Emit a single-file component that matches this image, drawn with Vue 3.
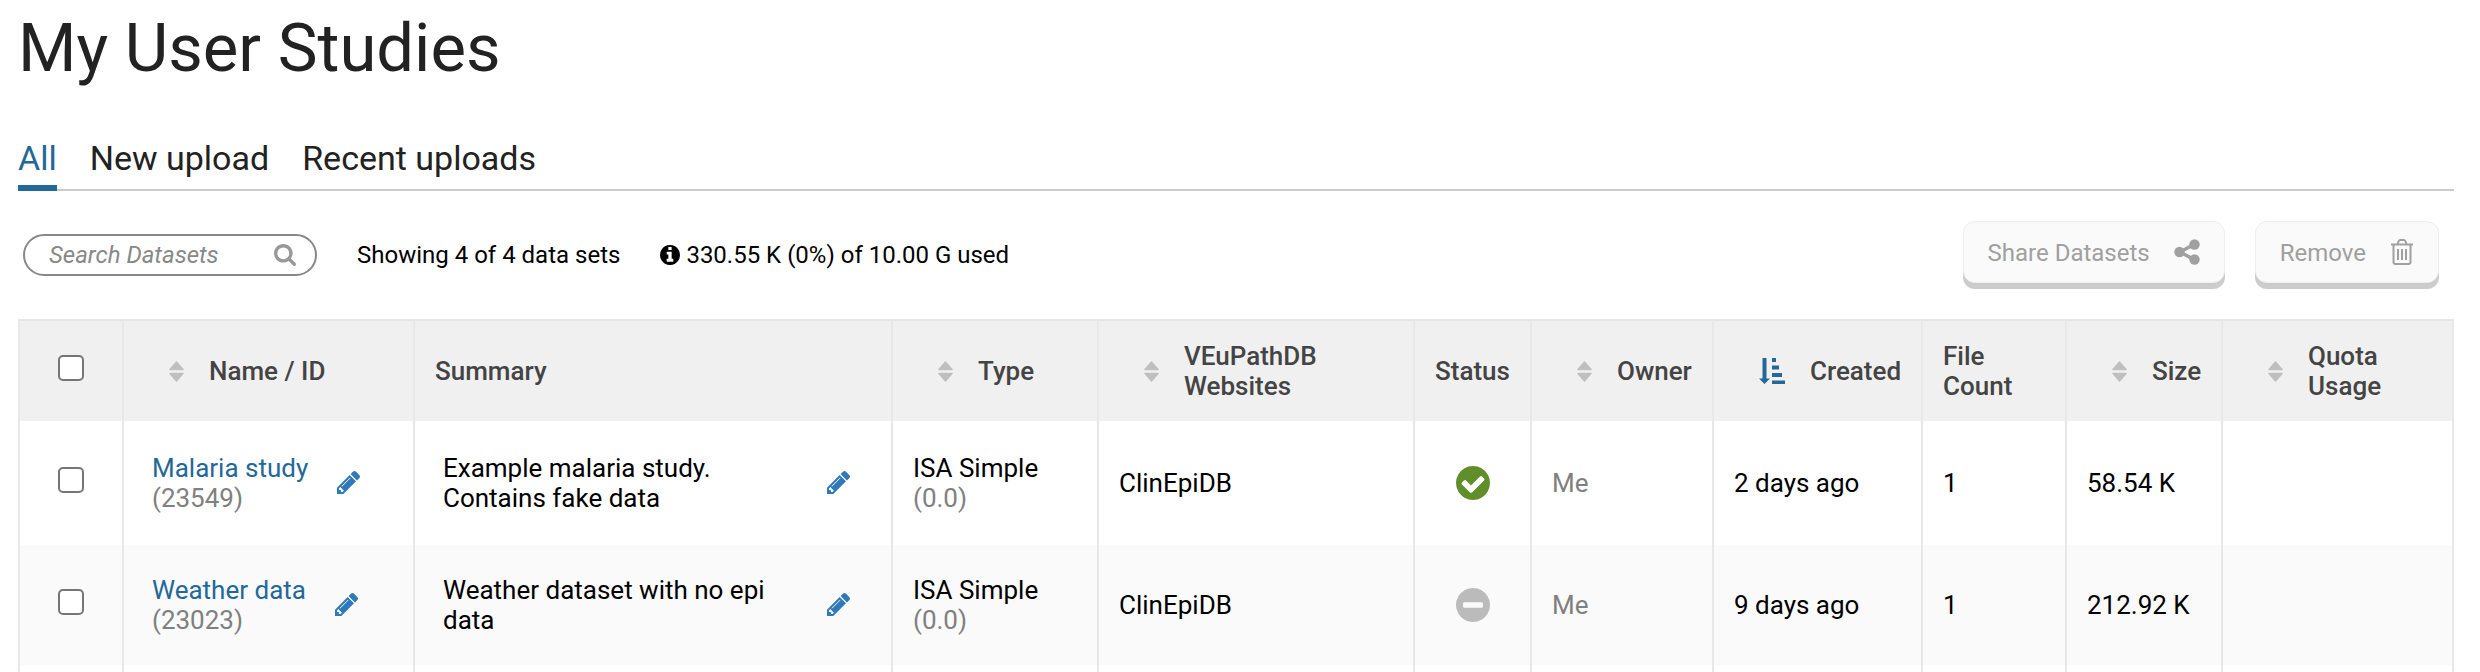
<script setup>
import { ref } from 'vue'

const search = ref('')
const tabs = ['All', 'New upload', 'Recent uploads']
const active = ref('All')

const disc = 'q0 209-103 385.5t-279.5 279.5-385.5 103-385.5-103-279.5-279.5-103-385.5 103-385.5 279.5-279.5 385.5-103 385.5 103 279.5 279.5 103 385.5z'
const infoPath = 'M1152 1376v-160q0-14-9-23t-23-9h-96v-512q0-14-9-23t-23-9h-320q-14 0-23 9t-9 23v160q0 14 9 23t23 9h96v320h-96q-14 0-23 9t-9 23v160q0 14 9 23t23 9h448q14 0 23-9t9-23zm-128-896v-160q0-14-9-23t-23-9h-192q-14 0-23 9t-9 23v160q0 14 9 23t23 9h192q14 0 23-9t9-23zm640 416' + disc
const checkPath = 'M1412 734q0-28-18-46l-91-90q-19-19-45-19t-45 19l-408 407-226-226q-19-19-45-19t-45 19l-91 90q-18 18-18 46 0 27 18 45l362 362q19 19 45 19 27 0 46-19l543-543q18-18 18-45zm252 162' + disc
const minusPath = 'M1344 960v-128q0-26-19-45t-45-19h-768q-26 0-45 19t-19 45v128q0 26 19 45t45 19h768q26 0 45-19t19-45zm320-64' + disc
const pencilPath = 'M491 1536l91-91-235-235-91 91v107h128v128h107zm523-928q0-22-22-22-10 0-17 7l-542 542q-7 7-7 17 0 22 22 22 10 0 17-7l542-542q7-7 7-17zm-54-192l416 416-832 832h-416v-416zm683 96q0 53-37 90l-166 166-416-416 166-165q36-38 90-38 53 0 91 38l235 234q37 39 37 91z'
const searchPath = 'M1216 832q0-185-131.5-316.5t-316.5-131.5-316.5 131.5-131.5 316.5 131.5 316.5 316.5 131.5 316.5-131.5 131.5-316.5zm512 832q0 52-38 90t-90 38q-54 0-90-38l-343-342q-179 124-399 124-143 0-273.5-55.5t-225-150-150-225-55.5-273.5 55.5-273.5 150-225 225-150 273.5-55.5 273.5 55.5 225 150 150 225 55.5 273.5q0 220-124 399l343 343q37 37 37 90z'

const columns = [
  { key: 'name', label: 'Name / ID', sort: 'both' },
  { key: 'summary', label: 'Summary' },
  { key: 'type', label: 'Type', sort: 'both' },
  { key: 'sites', label: 'VEuPathDB Websites', sort: 'both' },
  { key: 'status', label: 'Status' },
  { key: 'owner', label: 'Owner', sort: 'both' },
  { key: 'created', label: 'Created', sort: 'asc' },
  { key: 'files', label: 'File Count' },
  { key: 'size', label: 'Size', sort: 'both' },
  { key: 'quota', label: 'Quota Usage', sort: 'both' },
]

const rows = ref([
  { id: '23549', name: 'Malaria study', summary: 'Example malaria study. Contains fake data', ok: true, created: '2 days ago', size: '58.54 K', picked: false },
  { id: '23023', name: 'Weather data', summary: 'Weather dataset with no epi data', ok: false, created: '9 days ago', size: '212.92 K', picked: false },
])
</script>

<template>
  <main class="page">
    <h1>My User Studies</h1>

    <nav class="tabs">
      <a v-for="t in tabs" :key="t" href="#" :class="{ active: t === active }" @click.prevent="active = t">{{ t }}</a>
    </nav>

    <div class="toolbar">
      <label class="search">
        <input v-model="search" type="text" placeholder="Search Datasets" aria-label="Search Datasets" />
        <svg viewBox="64 128 1664 1664" aria-hidden="true"><path :d="searchPath" /></svg>
      </label>
      <span class="count">Showing 4 of 4 data sets</span>
      <span class="usage">
        <svg viewBox="128 128 1536 1536" aria-hidden="true"><path :d="infoPath" /></svg>
        330.55 K (0%) of 10.00 G used
      </span>
      <div class="actions">
        <button type="button" disabled>
          Share Datasets
          <svg class="share" viewBox="0 0 26 26" aria-hidden="true">
            <path d="M20 5.500 6 13l14 7.500" fill="none" stroke="currentColor" stroke-width="3.500" />
            <circle cx="20.500" cy="5.500" r="5.200" /><circle cx="5.500" cy="13" r="5.200" /><circle cx="20.500" cy="20.500" r="5.200" />
          </svg>
        </button>
        <button type="button" disabled>
          Remove
          <svg class="trash" viewBox="0 0 24 26" aria-hidden="true">
            <path d="M1 5.500h22M7.500 5l1.200-3q.4-1 1.400-1h3.800q1 0 1.400 1l1.200 3M3.500 6v17q0 2 2 2h13q2 0 2-2V6M8 10v11M12 10v11M16 10v11" />
          </svg>
        </button>
      </div>
    </div>

    <table>
      <colgroup>
        <col class="c-pick" />
        <col v-for="c in columns" :key="c.key" :class="'c-' + c.key" />
      </colgroup>
      <thead>
        <tr>
          <th class="pick"><input type="checkbox" aria-label="Select all datasets" /></th>
          <th v-for="c in columns" :key="c.key" scope="col">
            <div class="head">
              <svg v-if="c.sort === 'both'" class="sort" viewBox="0 0 15 21" aria-hidden="true">
                <path d="M7.500 1 14 8.500H1zM1 12.500h13L7.500 20z" stroke="currentColor" stroke-width="1.500" stroke-linejoin="round" />
              </svg>
              <svg v-else-if="c.sort === 'asc'" class="sorted" viewBox="0 0 26 26" aria-hidden="true">
                <path d="M3.500 0h4v20.500h3.500L5.500 26 0 20.500h3.500zM13 0h4v4h-4zM13 7.500h7v4h-7zM13 15h10v4H13zM13 22.500h13v3.500H13z" />
              </svg>
              <span>{{ c.label }}</span>
            </div>
          </th>
        </tr>
      </thead>
      <tbody>
        <tr v-for="r in rows" :key="r.id">
          <td class="pick"><input v-model="r.picked" type="checkbox" :aria-label="'Select ' + r.name" /></td>
          <td class="editable">
            <div class="edit">
              <div><a href="#">{{ r.name }}</a><br /><span class="muted">({{ r.id }})</span></div>
              <button type="button" aria-label="Edit name"><svg viewBox="128 149 1515 1515"><path :d="pencilPath" /></svg></button>
            </div>
          </td>
          <td class="editable">
            <div class="edit spread">
              <div>{{ r.summary }}</div>
              <button type="button" aria-label="Edit summary"><svg viewBox="128 149 1515 1515"><path :d="pencilPath" /></svg></button>
            </div>
          </td>
          <td>ISA Simple<br /><span class="muted">(0.0)</span></td>
          <td>ClinEpiDB</td>
          <td class="status">
            <svg :class="{ ok: r.ok }" viewBox="128 128 1536 1536" role="img" :aria-label="r.ok ? 'Installed' : 'Not installed'">
              <path :d="r.ok ? checkPath : minusPath" />
            </svg>
          </td>
          <td><span class="muted">Me</span></td>
          <td>{{ r.created }}</td>
          <td>1</td>
          <td>{{ r.size }}</td>
          <td></td>
        </tr>
        <tr class="next"><td v-for="n in 11" :key="n"></td></tr>
      </tbody>
    </table>
  </main>
</template>

<style>
body {
  background: #fff;
}
</style>

<style scoped>
.page {
  padding: 8px 26px 0 18px;
  font: 24px/30px Roboto, "Liberation Sans", sans-serif;
  color: #000;
}
svg {
  display: block;
  flex: none;
  fill: currentColor;
}
h1 {
  margin: 0;
  font-size: 67px;
  line-height: 80px;
  font-weight: 400;
  color: #222;
}
.tabs {
  display: flex;
  gap: 33px;
  margin-top: 49px;
  border-bottom: 2px solid #ccc;
}
.tabs a {
  margin-bottom: -2px;
  padding-bottom: 6px;
  border-bottom: 6px solid transparent;
  font-size: 34px;
  line-height: 42px;
  color: #222;
  text-decoration: none;
}
.tabs a.active {
  color: #236899;
  border-color: #236899;
}
.toolbar {
  display: flex;
  align-items: center;
  margin-top: 30px;
  padding: 0 15px 0 5px;
}
.search {
  display: flex;
  align-items: center;
  box-sizing: border-box;
  width: 294px;
  height: 42px;
  padding: 0 19px 0 24px;
  border: 2px solid #888;
  border-radius: 21px;
  color: #999;
}
.search input {
  flex: 1;
  min-width: 0;
  padding: 0;
  border: 0;
  outline: 0;
  background: none;
  font: italic 24px/30px Roboto, sans-serif;
  color: #333;
}
.search input::placeholder {
  color: #888;
  opacity: 1;
}
.search svg {
  width: 22px;
  height: 22px;
}
.count {
  margin-left: 40px;
}
.usage {
  display: flex;
  align-items: center;
  gap: 6px;
  margin-left: 40px;
}
.usage svg {
  width: 20px;
  height: 20px;
}
.actions {
  display: flex;
  gap: 30px;
  margin-left: auto;
}
.actions button {
  display: flex;
  align-items: center;
  gap: 24px;
  height: 62px;
  margin-bottom: 6px;
  padding: 2px 24px 0;
  border: 1px solid #eee;
  border-radius: 12px;
  background: #fafafa;
  box-shadow: 0 6px 0 #ccc;
  font: 24px/30px Roboto, sans-serif;
  color: #a0a0a0;
}
.actions svg {
  margin-bottom: 2px;
}
.share {
  width: 26px;
  height: 26px;
}
.trash {
  width: 24px;
  height: 26px;
}
.trash path {
  fill: none;
  stroke: currentColor;
  stroke-width: 2;
}
table {
  width: 100%;
  margin-top: 30px;
  table-layout: fixed;
  border-collapse: separate;
  border-spacing: 0;
  font-size: 26px;
}
.c-pick { width: 106px; }
.c-name { width: 291px; }
.c-summary { width: 478px; }
.c-type { width: 206px; }
.c-sites { width: 316px; }
.c-status { width: 117px; }
.c-owner { width: 182px; }
.c-created { width: 209px; }
.c-files { width: 144px; }
.c-size { width: 156px; }
.c-quota { width: 231px; }
th,
td {
  box-sizing: border-box;
  padding: 0 20px;
  border-right: 2px solid #e8e8e8;
  text-align: left;
  vertical-align: middle;
}
th:first-child,
td:first-child {
  border-left: 2px solid #e8e8e8;
}
th {
  height: 102px;
  border-top: 2px solid #e6e6e6;
  background: #f0f0f0;
  color: #444;
  font-weight: 500;
}
td {
  height: 120px;
}
tbody tr:first-child td {
  height: 124px;
}
tbody tr:nth-child(even) td {
  background: #fafafa;
}
tbody .next td {
  height: 7px;
}
.head {
  display: flex;
  align-items: center;
}
.sort {
  width: 15px;
  height: 21px;
  margin: 0 25px;
  color: #bfbfbf;
}
.sorted {
  width: 26px;
  height: 26px;
  margin: 0 25px;
  color: #236899;
}
.pick {
  padding: 0 0 6px;
  text-align: center;
}
.pick input {
  display: block;
  appearance: none;
  width: 26px;
  height: 26px;
  margin: 0 auto;
  border: 2px solid #767676;
  border-radius: 5px;
  background: #fff;
}
.pick input:checked {
  background: #236899;
}
.editable {
  padding: 0 41px 0 28px;
}
.edit {
  display: flex;
  align-items: center;
  gap: 29px;
}
.spread div {
  flex: 1;
}
.edit button {
  padding: 0 0 2px;
  border: 0;
  background: none;
  color: #2f78b9;
}
.edit a {
  color: #236899;
  text-decoration: none;
}
.edit svg {
  width: 23px;
  height: 23px;
}
.muted {
  color: #808080;
}
.status svg {
  width: 34px;
  height: 34px;
  margin: 0 auto;
  color: #bbb;
}
.status svg.ok {
  color: #608e29;
}
</style>
